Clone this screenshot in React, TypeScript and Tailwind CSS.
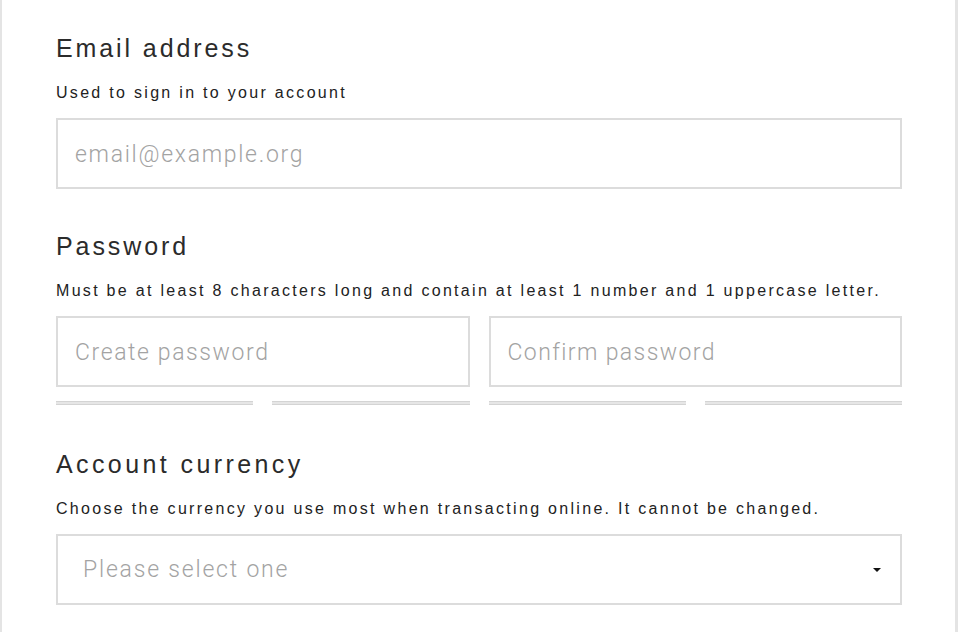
export default function App() {
  return (
    <div className="min-h-[632px] w-[958px] bg-white border-l-2 border-r-[3px] border-[#e4e4e4] font-['Liberation_Sans',Arial,sans-serif]">
      <div className="pl-[54px] pr-[53px] pt-[33px] pb-6">
        <Section
          title="Email address"
          hint="Used to sign in to your account"
        >
          <input
            type="email"
            placeholder="email@example.org"
            className="h-[71px] w-full border-2 border-[#dcdcdc] px-[17px] pt-[2px] text-[23px] font-light font-['Roboto',sans-serif] tracking-[1.7px] text-[#333] placeholder:text-[#a3a3a3] outline-none"
          />
        </Section>

        <div className="mt-[42px]">
          <Section
            title="Password"
            hint="Must be at least 8 characters long and contain at least 1 number and 1 uppercase letter."
          >
            <div className="grid grid-cols-2 gap-[19px]">
              <input
                type="password"
                placeholder="Create password"
                className="h-[71px] w-full border-2 border-[#dcdcdc] px-[17px] pt-[2px] text-[23px] font-light font-['Roboto',sans-serif] tracking-[1.6px] placeholder:text-[#a3a3a3] outline-none"
              />
              <input
                type="password"
                placeholder="Confirm password"
                className="h-[71px] w-full border-2 border-[#dcdcdc] px-[17px] pt-[2px] text-[23px] font-light font-['Roboto',sans-serif] tracking-[1.4px] placeholder:text-[#a3a3a3] outline-none"
              />
            </div>
            <div className="mt-[14px] grid grid-cols-4 gap-[19px]">
              {[0, 1, 2, 3].map((i) => (
                <div key={i} className="h-[4px] border-y border-[#d4d4d4] bg-[#e6e6e6]" />
              ))}
            </div>
          </Section>
        </div>

        <div className="mt-[44px]">
          <Section
            title="Account currency"
            hint="Choose the currency you use most when transacting online. It cannot be changed."
            wide
          >
            <div className="mt-[1px] flex h-[71px] w-full items-center justify-between border-2 border-[#dcdcdc] pl-[25px] pr-[19px]">
              <span className="pt-[2px] text-[23px] font-light font-['Roboto',sans-serif] tracking-[1.8px] text-[#a3a3a3]">
                Please select one
              </span>
              <span className="h-0 w-0 border-x-[4px] border-t-[4px] border-x-transparent border-t-[#111]" />
            </div>
          </Section>
        </div>
      </div>
    </div>
  );
}

function Section({
  title,
  hint,
  wide,
  children,
}: {
  title: string;
  hint: string;
  wide?: boolean;
  children: React.ReactNode;
}) {
  return (
    <div>
      <h2
        className={
          wide
            ? "text-[25px] leading-[30px] tracking-[3.4px] text-[#2b2b2b]"
            : "text-[25px] leading-[30px] tracking-[2.9px] text-[#2b2b2b]"
        }
      >
        {title}
      </h2>
      <p className="mt-[20px] text-[16px] leading-[20px] tracking-[2.3px] text-[#222]">{hint}</p>
      <div className="mt-[15px]">{children}</div>
    </div>
  );
}
